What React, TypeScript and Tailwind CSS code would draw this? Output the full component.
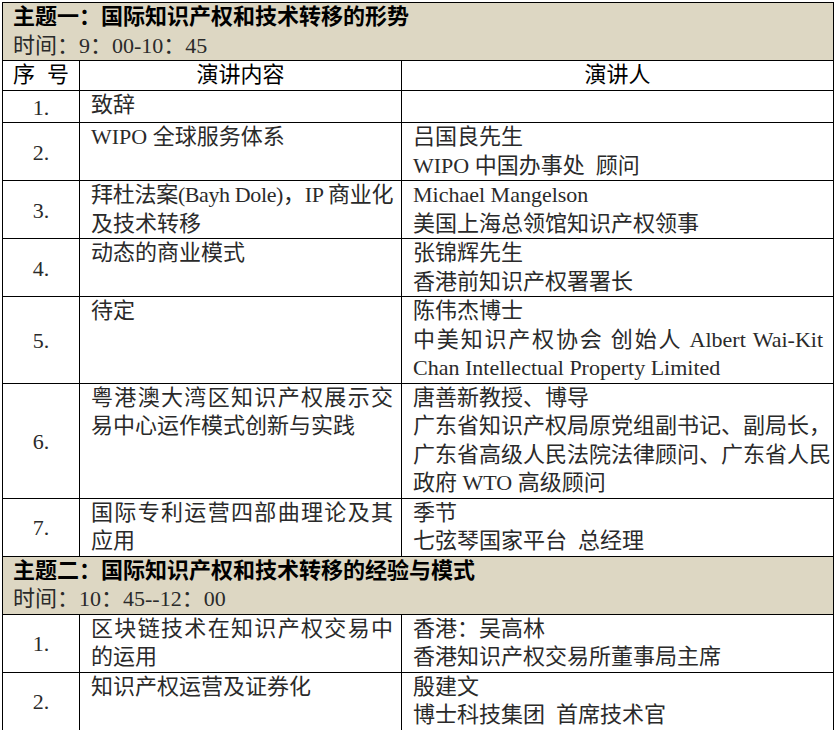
import React from 'react';

type Line = { t: string; j?: boolean; tight?: boolean };
type Talk = { no: string; topic: Line[]; speaker: Line[] };

const L = (t: string, j = false, tight = false): Line => ({ t, j, tight });

const session1: Talk[] = [
  { no: '1.', topic: [L('致辞')], speaker: [] },
  {
    no: '2.',
    topic: [L('WIPO 全球服务体系')],
    speaker: [L('吕国良先生'), L('WIPO 中国办事处\u2002顾问')],
  },
  {
    no: '3.',
    topic: [L('拜杜法案(Bayh Dole)，IP 商业化', true, true), L('及技术转移')],
    speaker: [L('Michael Mangelson'), L('美国上海总领馆知识产权领事')],
  },
  {
    no: '4.',
    topic: [L('动态的商业模式')],
    speaker: [L('张锦辉先生'), L('香港前知识产权署署长')],
  },
  {
    no: '5.',
    topic: [L('待定')],
    speaker: [
      L('陈伟杰博士'),
      L('中美知识产权协会 创始人 Albert Wai-Kit', true),
      L('Chan Intellectual Property Limited'),
    ],
  },
  {
    no: '6.',
    topic: [L('粤港澳大湾区知识产权展示交', true), L('易中心运作模式创新与实践')],
    speaker: [
      L('唐善新教授、博导'),
      L('广东省知识产权局原党组副书记、副局长，'),
      L('广东省高级人民法院法律顾问、广东省人民'),
      L('政府 WTO 高级顾问'),
    ],
  },
  {
    no: '7.',
    topic: [L('国际专利运营四部曲理论及其', true), L('应用')],
    speaker: [L('季节'), L('七弦琴国家平台\u2002总经理')],
  },
];

const session2: Talk[] = [
  {
    no: '1.',
    topic: [L('区块链技术在知识产权交易中', true), L('的运用')],
    speaker: [L('香港：吴高林'), L('香港知识产权交易所董事局主席')],
  },
  {
    no: '2.',
    topic: [L('知识产权运营及证券化')],
    speaker: [L('殷建文'), L('博士科技集团\u2002首席技术官')],
  },
];

function Lines({ lines }: { lines: Line[] }) {
  return (
    <>
      {lines.map((l, i) => (
        <div
          key={i}
          className={`whitespace-nowrap ${l.j ? '[text-align-last:justify]' : ''} ${
            l.tight ? 'tracking-[-0.4px]' : ''
          }`}
        >
          {l.t}
        </div>
      ))}
    </>
  );
}

function Band({ title, time }: { title: string; time: string }) {
  return (
    <div className="bg-[#ddd7c3] pl-[10px] border-t border-black first:border-t-0">
      <div className="font-bold text-black">{title}</div>
      <div>{time}</div>
    </div>
  );
}

function TalkRow({ talk }: { talk: Talk }) {
  return (
    <div className="flex border-t border-black">
      <div className="w-[77px] shrink-0 border-r border-black flex items-center justify-center pt-[3px]">
        {talk.no}
      </div>
      <div className="w-[322px] shrink-0 border-r border-black pl-[11px] pr-[8px]">
        <Lines lines={talk.topic} />
      </div>
      <div className="flex-1 min-w-0 pl-[11px] pr-[10px]">
        <Lines lines={talk.speaker} />
        {talk.speaker.length === 0 && <div>&nbsp;</div>}
      </div>
    </div>
  );
}

export default function App() {
  return (
    <div className="min-h-screen bg-white pt-[2px] pl-[2px]">
      <div className="w-[832px] border border-black text-[22px] leading-[28.5px] text-[#2a2a2a] font-['Liberation_Serif','Noto_Sans_CJK_SC',serif]">
        <Band title="主题一：国际知识产权和技术转移的形势" time="时间：9：00-10：45" />

        {/* column heads */}
        <div className="flex border-t border-black text-black">
          <div className="w-[77px] shrink-0 border-r border-black pl-[10px] whitespace-nowrap">
            <span>序</span>
            <span className="ml-[12px]">号</span>
          </div>
          <div className="w-[322px] shrink-0 border-r border-black text-center">演讲内容</div>
          <div className="flex-1 text-center">演讲人</div>
        </div>

        {session1.map((t) => (
          <TalkRow key={'a' + t.no} talk={t} />
        ))}

        <Band title="主题二：国际知识产权和技术转移的经验与模式" time="时间：10：45--12：00" />

        {session2.map((t) => (
          <TalkRow key={'b' + t.no} talk={t} />
        ))}
      </div>
    </div>
  );
}
